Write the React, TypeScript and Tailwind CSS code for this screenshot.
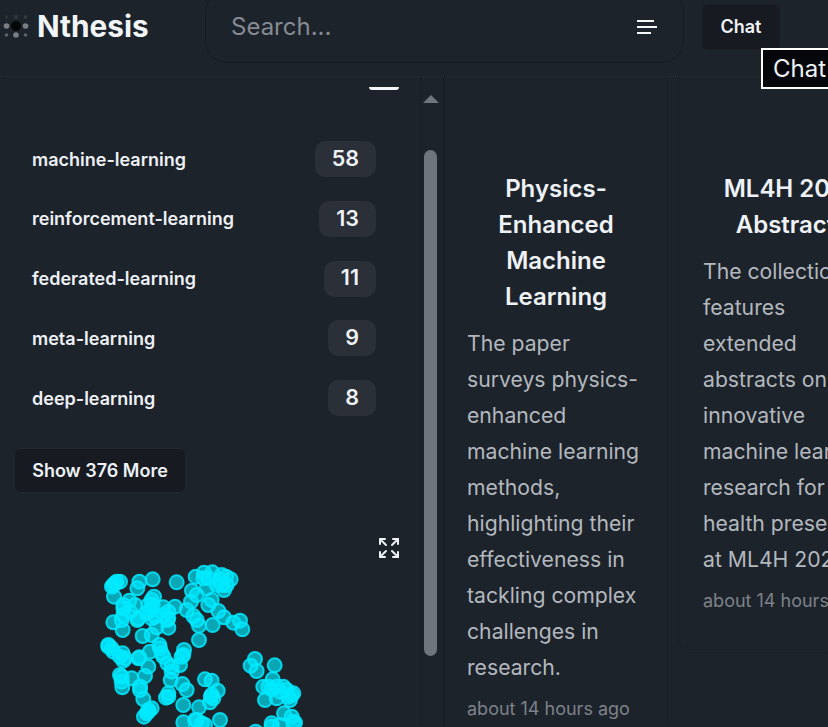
import { FC } from "react";
import { Expand } from "lucide-react";

const tags = [
	{ name: "machine-learning", count: 58 },
	{ name: "reinforcement-learning", count: 13 },
	{ name: "federated-learning", count: 11 },
	{ name: "meta-learning", count: 9 },
	{ name: "deep-learning", count: 8 },
];

// positions read off the graph, in 3x crop coordinates
const nodes: [number, number][] = [
	[100, 165], [110, 155], [120, 155], [102, 200], [96, 170], [178, 155], [172, 175], [218, 148], [290, 157],
	[347, 140], [372, 128], [397, 127], [370, 145], [438, 140], [452, 148], [420, 150], [432, 180], [410, 165],
	[380, 175], [336, 182], [350, 195], [333, 215], [395, 210], [385, 225], [222, 200], [218, 225], [148, 212],
	[130, 235], [165, 225], [285, 230], [250, 232], [265, 245], [205, 225], [320, 240], [340, 258], [350, 270],
	[357, 287], [415, 243], [432, 262], [398, 285], [460, 278], [480, 272], [487, 298], [100, 277], [125, 270],
	[128, 300], [172, 270], [215, 265], [188, 318], [215, 315], [230, 292], [265, 293], [262, 270], [357, 330],
	[85, 345], [100, 365], [128, 370], [130, 392], [178, 382], [210, 365], [238, 345], [245, 370], [312, 360],
	[305, 380], [300, 405], [262, 400], [275, 425], [272, 450], [120, 435], [125, 455], [127, 472], [155, 445],
	[205, 410], [195, 438], [180, 480], [190, 507], [307, 462], [320, 480], [265, 500], [258, 503], [375, 448],
	[395, 452], [413, 482], [393, 500], [390, 517], [310, 525], [357, 532], [215, 535], [200, 550], [192, 560],
	[525, 387], [512, 407], [530, 423], [584, 406], [578, 448], [550, 470], [575, 478], [555, 510], [590, 505],
	[610, 470], [640, 490], [630, 510], [612, 550], [635, 560], [645, 578], [575, 580], [310, 577], [350, 570],
	[375, 585], [420, 570], [527, 605], [600, 585],
	// denser clumps
	[105, 160], [425, 165], [440, 165], [425, 135], [385, 145], [215, 210], [210, 240], [200, 250], [225, 260],
	[130, 255], [175, 265], [265, 265], [250, 255], [130, 225], [150, 245], [85, 350], [95, 355], [120, 380],
	[135, 385], [175, 385], [240, 355], [250, 380], [310, 375], [275, 410], [125, 440], [180, 470], [265, 490],
	[395, 495], [400, 505], [205, 545], [565, 470], [590, 470], [620, 480], [635, 495], [600, 485], [625, 500],
	[345, 570], [365, 580], [640, 575], [575, 590], [205, 540],
];

const Graph: FC = () => (
	<svg viewBox="0 0 340 197" className="ml-[80px] h-[197px] w-[340px] overflow-hidden">
		{nodes.map(([x, y], i) => (
			<circle
				key={i}
				cx={x / 3}
				cy={y / 3}
				r={7}
				fill="#00eaff"
				fillOpacity={0.66}
				stroke="#00eaff"
				strokeOpacity={0.85}
				strokeWidth={2}
			/>
		))}
	</svg>
);

const Logo: FC = () => (
	<svg viewBox="0 0 30 30" className="h-[30px] w-[30px] shrink-0">
		<circle cx="16" cy="15" r="5" fill="#050608" />
		<circle cx="6.5" cy="15" r="2.8" fill="#7a7f86" />
		<circle cx="25.5" cy="15" r="2.8" fill="#7a7f86" />
		<circle cx="16" cy="24" r="2.8" fill="#7a7f86" />
		<circle cx="16" cy="6" r="2.2" fill="#30343b" />
		<circle cx="6.5" cy="24" r="1.8" fill="#5f646b" />
		<circle cx="25.5" cy="24" r="1.8" fill="#5f646b" />
		<circle cx="6.5" cy="6" r="1.7" fill="#2e3239" />
		<circle cx="25.5" cy="6" r="1.7" fill="#3a3e45" />
	</svg>
);

const Card: FC<{ title: string; text: string; width: string; padding: string }> = ({ title, text, width, padding }) => (
	<article className={`${width} ${padding} shrink-0 rounded-b-[14px] border-x border-b border-dotted border-[#181c22] pt-[96px] pb-[37px]`}>
		<h2 className="text-center text-[24px] leading-[36px] font-semibold text-[#eef2f7]">{title}</h2>
		<p className="mt-[9.5px] text-[21.2px] leading-[36px] text-[#b3b8bf]">{text}</p>
		<p className="mt-[10px] text-[18px] leading-[28px] text-[#7d828a]">about 14 hours ago</p>
	</article>
);

export default function App() {
	return (
		<div className="relative flex h-[727px] w-[828px] flex-col overflow-hidden bg-[#1d232a] font-['Inter',sans-serif]">
			<header className="flex h-[77px] shrink-0 items-start border-b border-dotted border-[#2a2f37]">
				<div className="mt-[11px] flex w-[205px] items-center gap-[7px]">
					<Logo />
					<span className="text-[29.75px] leading-[30px] font-bold text-[#f2f6fb]">Nthesis</span>
				</div>
				<div className="-mt-[10px] flex h-[73px] w-[479px] items-center justify-between rounded-[22px] border border-[#171a20] pr-[26px] pl-[25px]">
					<span className="text-[24px] text-[#868b93]">Search...</span>
					<svg viewBox="0 0 20 14" className="h-[14px] w-[20px]" fill="none" stroke="#f5f7fa" strokeWidth="2">
						<path d="M0 1h17M0 7h20M0 13h14" />
					</svg>
				</div>
				<button className="mt-[4px] ml-[18px] h-[46px] w-[78px] rounded-[6px] border border-[#1a1d23] bg-[#171a20] pb-[1px] text-[18px] font-semibold text-[#f0f3f7]">
					Chat
				</button>
			</header>

			<div className="absolute top-[48px] left-[761px] border-2 border-white bg-[#05070b] py-[3px] pr-[20px] pl-[10px] text-[24px] leading-[31px] whitespace-nowrap text-[#eef2f7]">
				Chat
			</div>

			<div className="flex min-h-0 flex-1">
				<aside className="w-[420px] shrink-0">
					<div className="mt-[10px] ml-[369px] h-[3px] w-[30px] rounded-b-[6px] bg-[#f4f6f8]" />
					<ul className="mt-[51px] flex flex-col gap-[23.75px] pr-[44px] pl-[32px]">
						{tags.map((tag) => (
							<li key={tag.name} className="flex h-[36px] items-center justify-between">
								<span className="text-[18px] font-semibold text-[#edf1f6]">{tag.name}</span>
								<span className="flex h-[36px] items-center rounded-[10px] bg-[#2a2f38] px-[17px] pb-[2px] text-[21.5px] font-semibold text-[#eef1f5]">
									{tag.count}
								</span>
							</li>
						))}
					</ul>
					<button className="mt-[32px] ml-[14px] h-[45px] w-[172px] rounded-[6px] border border-[#232830] bg-[#171b21] text-[18px] font-semibold text-[#edf1f6]">
						Show 376 More
					</button>
					<div className="relative mt-[37px]">
						<Expand size={24} strokeWidth={2} className="absolute top-[6px] left-[377px] text-[#eef1f5]" />
						<Graph />
					</div>
				</aside>

				<div className="flex w-[24px] shrink-0 flex-col items-center border-x border-[#181c22] pr-[3px]">
					<div className="mt-[18px] h-0 w-0 border-x-[8px] border-b-[8px] border-x-transparent border-b-[#6f757d]" />
					<div className="mt-[47px] h-[506px] w-[13px] rounded-full bg-[#6f757c]" />
				</div>

				<main className="-mt-[2px] flex min-w-0 flex-1 items-start gap-[10px] overflow-hidden">
					<Card
						width="w-[224px]"
						padding="px-[22px]"
						title="Physics-Enhanced Machine Learning"
						text="The paper surveys physics-enhanced machine learning methods, highlighting their effectiveness in tackling complex challenges in research."
					/>
					<Card
						width="w-[228px]"
						padding="px-6"
						title="ML4H 2023 Abstracts"
						text="The collection features extended abstracts on innovative machine learning research for health presented at ML4H 2023."
					/>
				</main>
			</div>
		</div>
	);
}
